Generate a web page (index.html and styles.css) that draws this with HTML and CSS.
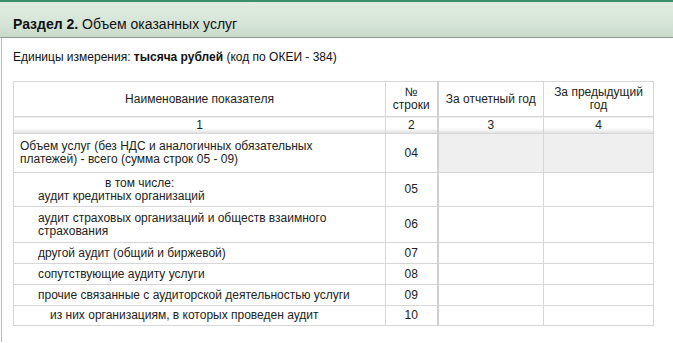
FILE: index.html
```html
<!DOCTYPE html>
<html lang="ru">
<head>
<meta charset="utf-8">
<link rel="stylesheet" href="styles.css">
</head>
<body>
<div class="topline"></div>
<div class="section-head"><b>Раздел 2.</b> Объем оказанных услуг</div>
<div class="content">
  <div class="units">Единицы измерения: <b>тысяча рублей</b> (код по ОКЕИ - 384)</div>
  <table class="grid">
    <colgroup>
      <col class="c1"><col class="c2"><col class="c3"><col class="c4">
    </colgroup>
    <tr class="h">
      <th>Наименование показателя</th>
      <th>№<br>строки</th>
      <th>За отчетный год</th>
      <th>За предыдущий<br>год</th>
    </tr>
    <tr class="nums">
      <td>1</td><td>2</td><td>3</td><td>4</td>
    </tr>
    <tr class="r04">
      <td class="name p0">Объем услуг (без НДС и аналогичных обязательных<br>платежей) - всего (сумма строк 05 - 09)</td>
      <td class="code">04</td><td class="shade"></td><td class="shade"></td>
    </tr>
    <tr class="r05">
      <td class="name p1"><span class="incl">в том числе:</span><br>аудит кредитных организаций</td>
      <td class="code">05</td><td></td><td></td>
    </tr>
    <tr class="r06">
      <td class="name p1">аудит страховых организаций и обществ взаимного<br>страхования</td>
      <td class="code">06</td><td></td><td></td>
    </tr>
    <tr class="rs">
      <td class="name p1">другой аудит (общий и биржевой)</td>
      <td class="code">07</td><td></td><td></td>
    </tr>
    <tr class="rs">
      <td class="name p1">сопутствующие аудиту услуги</td>
      <td class="code">08</td><td></td><td></td>
    </tr>
    <tr class="rs">
      <td class="name p1">прочие связанные с аудиторской деятельностью услуги</td>
      <td class="code">09</td><td></td><td></td>
    </tr>
    <tr class="r10">
      <td class="name p2">из них организациям, в которых проведен аудит</td>
      <td class="code">10</td><td></td><td></td>
    </tr>
  </table>
</div>
</body>
</html>
```
FILE: styles.css
```css
html, body {
  margin: 0;
  padding: 0;
  background: #fff;
}
body {
  font-family: "Liberation Sans", Arial, sans-serif;
  color: #222;
  font-size: 12px;
  height: 343px;
  overflow: hidden;
}
.topline {
  height: 2px;
  background: #3d8d6d;
}
.section-head {
  height: 36px;
  box-sizing: border-box;
  padding: 14px 0 0 13px;
  font-size: 14px;
  line-height: 16px;
  color: #111;
  background: linear-gradient(to bottom, #e1ece1 0%, #d6e5d7 60%, #c9dacb 100%);
  border-bottom: 1px solid #8e9c93;
}
.content {
  margin-left: 1px;
  border-left: 1px solid #b9b9b9;
  height: 304px;
  box-sizing: border-box;
  padding: 12px 0 0 11px;
}
.units {
  font-size: 12px;
  line-height: 14px;
  color: #111;
}
.grid {
  margin-top: 17px;
  border-collapse: collapse;
  table-layout: fixed;
  width: 640px;
}
.c1 { width: 372px; }
.c2 { width: 52px; }
.c3 { width: 106px; }
.c4 { width: 110px; }
.grid th, .grid td {
  border: 1px solid #d6d6d6;
  padding: 0;
  font-weight: normal;
  font-size: 12px;
  line-height: 13px;
  text-align: center;
  vertical-align: middle;
}
.grid tr > :nth-child(2) {
  border-right: 2px solid #d0d0d0;
}
.h th { height: 34px; }
.nums td {
  height: 16px;
  background: linear-gradient(to bottom, #fff 0%, #fff 65%, #e9e9e9 90%, #dcdcdc 100%);
}
.r04 td { height: 38px; }
.r05 td { height: 33px; }
.r06 td { height: 35px; }
.rs td { height: 20px; }
.r10 td { height: 19px; }
.grid td.name { text-align: left; }
.grid td.p0 { padding-left: 6px; }
.grid td.p1 { padding-left: 24px; }
.grid td.p2 { padding-left: 36px; }
.incl { padding-left: 67px; }
.shade { background: #efefef; }
```
